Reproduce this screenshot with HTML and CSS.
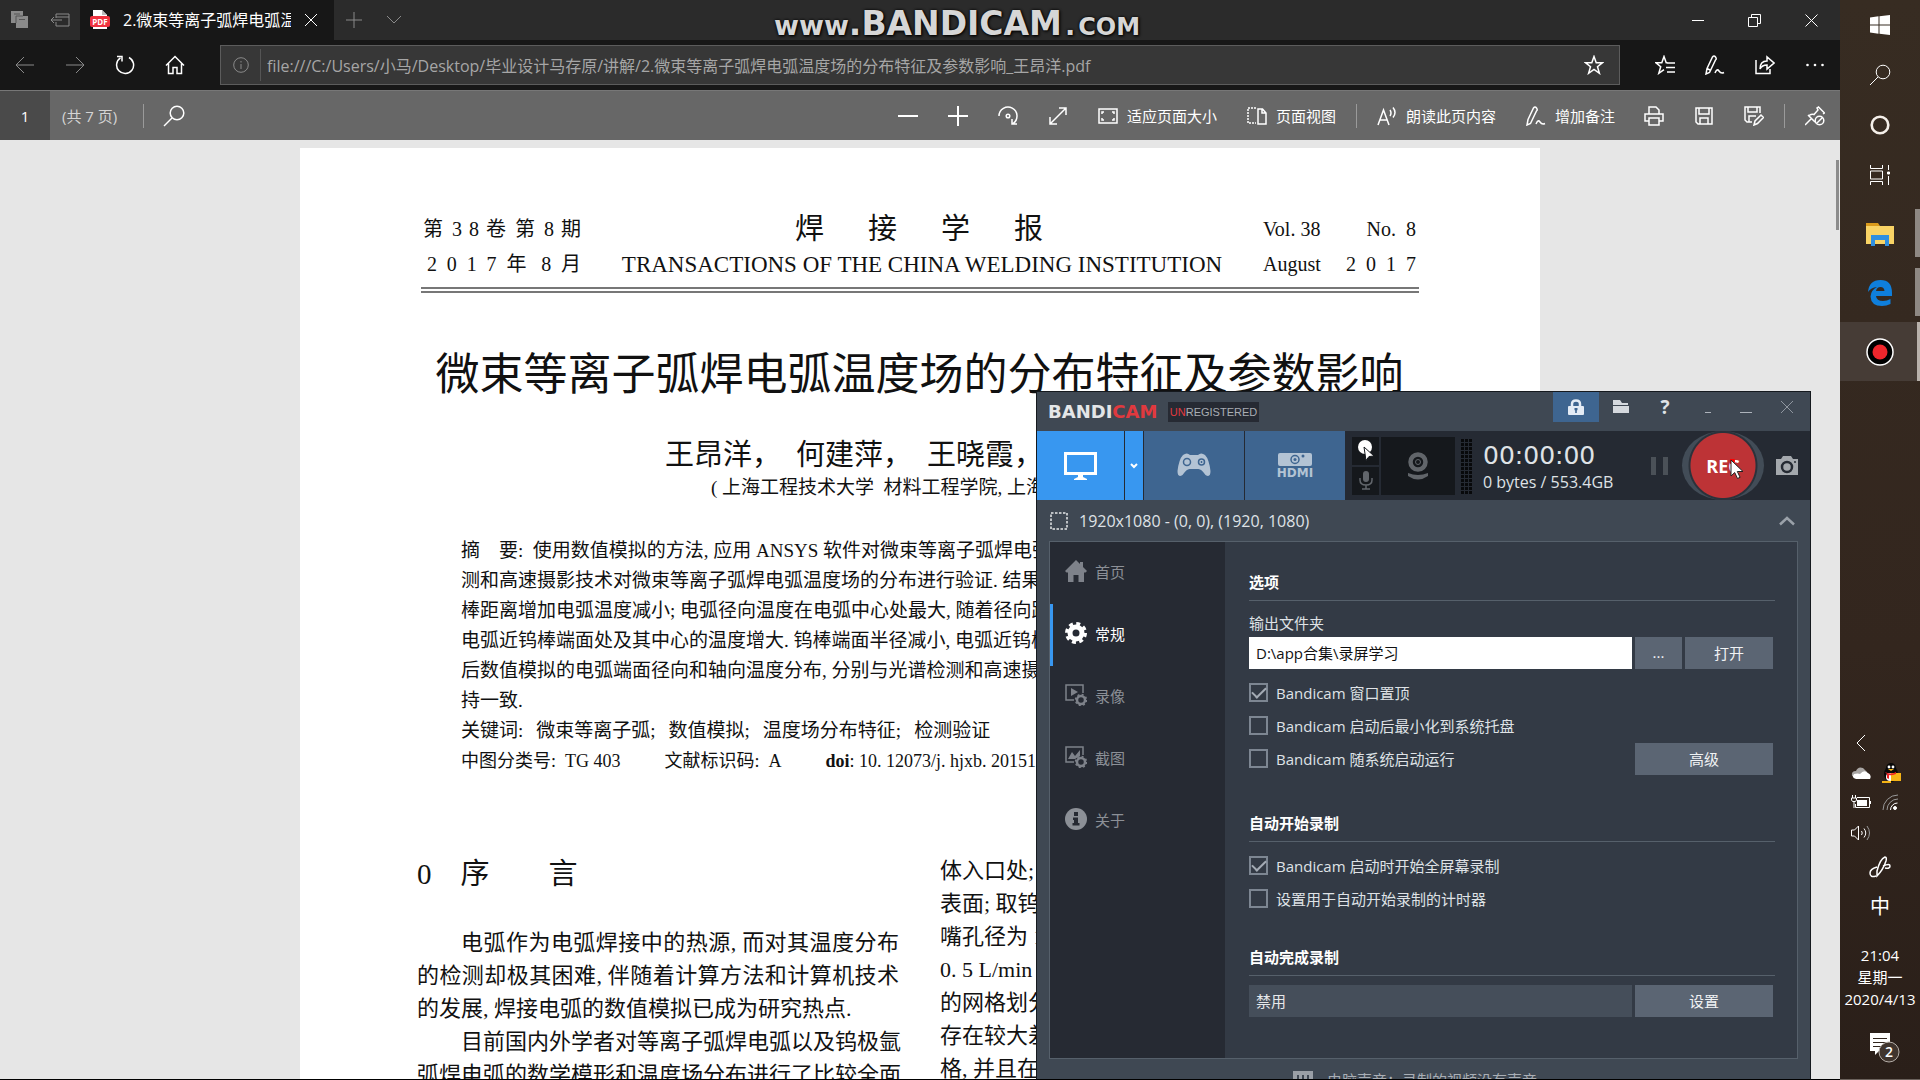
FILE: index.html
```html
<!DOCTYPE html>
<html lang="zh-CN">
<head>
<meta charset="utf-8">
<title>2.微束等离子弧焊电弧温度场</title>
<link rel="stylesheet" href="styles.css">
</head>
<body>
<div class="browser">
  <header class="tabs">
    <button class="tab-tool" aria-label="标签页"><svg width="20" height="20" viewBox="0 0 20 20"><path fill="#8a8a8a" d="M1 1h12v5h5v12H6v-5H1z"/><path d="M6 13V6h7M4 4h6M9 9.500h6" stroke="#555" fill="none"/></svg></button>
    <button class="tab-tool" aria-label="搁置标签页"><svg class="line dim" width="20" height="20" viewBox="0 0 20 20"><path d="M6 8V4h13v12H6v-4M6 7h13M1 10h11M4 7l-3 3 3 3"/></svg></button>
    <div class="tab">
      <svg width="20" height="22" viewBox="0 0 20 22"><path fill="#fff" d="M3 1h9l5 5v14H3z"/><path fill="#bbb" d="M12 1l5 5h-5z"/><rect y="7" width="20" height="11" rx="2" fill="#ef3340"/><text x="10" y="16" text-anchor="middle" class="pdf-mark">PDF</text></svg>
      <span class="tab-title">2.微束等离子弧焊电弧温度场</span>
      <button aria-label="关闭标签页"><svg class="line" width="14" height="14" viewBox="0 0 14 14"><path d="M1 1l12 12M13 1L1 13"/></svg></button>
    </div>
    <button class="tab-tool" aria-label="新建标签页"><svg class="line dim" width="18" height="18" viewBox="0 0 18 18"><path d="M9 1v16M1 9h16"/></svg></button>
    <button class="tab-tool" aria-label="标签页预览"><svg class="line dim" width="16" height="10" viewBox="0 0 16 10"><path d="M1 1l7 7 7-7"/></svg></button>
    <div class="win-buttons">
      <button aria-label="最小化"><svg class="line" width="12" height="12" viewBox="0 0 12 12"><path d="M0 6.500h12"/></svg></button>
      <button aria-label="还原"><svg class="line" width="13" height="13" viewBox="0 0 13 13"><path d="M.5 3.500h9v9h-9zM3.500 3V.5h9v9H10"/></svg></button>
      <button aria-label="关闭"><svg class="line" width="13" height="13" viewBox="0 0 13 13"><path d="M.5.5l12 12M12.500.5l-12 12"/></svg></button>
    </div>
  </header>

  <nav class="address-row">
    <button class="tool" aria-label="后退"><svg class="line dim" width="20" height="20" viewBox="0 0 20 20"><path d="M1 10h18M9 2l-8 8 8 8"/></svg></button>
    <button class="tool" aria-label="前进"><svg class="line dim" width="20" height="20" viewBox="0 0 20 20"><path d="M1 10h18M11 2l8 8-8 8"/></svg></button>
    <button class="tool" aria-label="刷新"><svg class="line bold" width="20" height="20" viewBox="0 0 20 20"><path d="M14 2.500a8.500 8.500 0 1 1-8.500.4M2 1.500h5v5"/></svg></button>
    <button class="tool" aria-label="主页"><svg class="line bold" width="20" height="20" viewBox="0 0 20 20"><path d="M1 10.500L10 1.500l9 9M3.500 8.500V18.500h4.500v-6h4v6h4.500v-10"/></svg></button>
    <div class="address">
      <svg class="line dim" width="16" height="16" viewBox="0 0 16 16"><circle cx="8" cy="8" r="7.300"/><path d="M8 7v5M8 4v1.500"/></svg>
      <input aria-label="地址" value="file:///C:/Users/小马/Desktop/毕业设计马存原/讲解/2.微束等离子弧焊电弧温度场的分布特征及参数影响_王昂洋.pdf">
      <button aria-label="收藏"><svg class="line bold" width="20" height="20" viewBox="0 0 20 20"><path d="M10 1.500l2.200 6.200h6.300l-5 4 1.900 6.600L10 14.400l-5.400 3.900 1.900-6.600-5-4h6.300z"/></svg></button>
    </div>
    <button class="tool" aria-label="收藏夹"><svg class="line bold" width="20" height="20" viewBox="0 0 20 20"><path d="M12.500 7.700h-1.300L9 1.500 6.800 7.700H.8l4.900 4-1.900 6.600L9 14.600M12 8h8M11 12.500h9M12 17h8"/></svg></button>
    <button class="tool" aria-label="添加笔记"><svg class="line bold" width="20" height="20" viewBox="0 0 20 20"><path d="M2 13.500L7.500 2q1.500-2 3 0t0 3L4.500 17.500l-3.500 1.500zM2 13.500l3 1.500M10 18q2-5 4-2t5 1.500"/></svg></button>
    <button class="tool" aria-label="共享"><svg class="line bold" width="20" height="20" viewBox="0 0 20 20"><path d="M1 5v13.500h14V14M5 14q0-8 7-8V2l7 6-7 6v-4q-5 0-7 4z"/></svg></button>
    <button class="tool" aria-label="更多"><svg width="18" height="4" viewBox="0 0 18 4" fill="#fff"><circle cx="1.500" cy="2" r="1.300"/><circle cx="9" cy="2" r="1.300"/><circle cx="16.500" cy="2" r="1.300"/></svg></button>
  </nav>

  <div class="pdf-bar">
    <input class="page-no" aria-label="页码" value="1">
    <span class="page-total">(共 7 页)</span>
    <i class="sep"></i>
    <button class="tool find" aria-label="查找"><svg class="line bold" width="22" height="22" viewBox="0 0 22 22"><circle cx="14" cy="8" r="6.800"/><path d="M9 13l-8 8"/></svg></button>
    <div class="pdf-tools">
      <button class="tool" aria-label="缩小"><svg class="line heavy" width="20" height="20" viewBox="0 0 20 20"><path d="M0 10h20"/></svg></button>
      <button class="tool" aria-label="放大"><svg class="line heavy" width="20" height="20" viewBox="0 0 20 20"><path d="M0 10h20M10 0v20"/></svg></button>
      <button class="tool" aria-label="旋转"><svg class="line bold" width="20" height="20" viewBox="0 0 20 20"><path d="M1 10a9 9 0 1 1 14 7.500M19 18h-5v-5"/><circle cx="10" cy="10" r="1.800"/></svg></button>
      <button class="tool" aria-label="全屏"><svg class="line bold" width="18" height="18" viewBox="0 0 18 18"><path d="M1 17L17 1M10 1h7v7M1 10v7h7"/></svg></button>
      <button class="wide"><svg class="line bold" width="20" height="16" viewBox="0 0 20 16"><path d="M1 1h18v14H1zM4 6V4h2M14 4h2v2M4 10v2h2M14 12h2v-2"/></svg>适应页面大小</button>
      <button class="wide"><svg class="line bold" width="20" height="18" viewBox="0 0 20 18"><path stroke-dasharray="2 1" d="M9 1H1v15h8"/><path d="M11 2h4.500L19 6v11h-8zM15 2v4h4"/></svg>页面视图</button>
      <i class="sep"></i>
      <button class="wide"><svg class="line bold" width="20" height="20" viewBox="0 0 20 20"><path d="M1 19L6.500 4 12 19M3 14h7M13 4q2 3 0 6M16 1.500q4 5 0 10"/></svg>朗读此页内容</button>
      <button class="wide"><svg class="line bold" width="20" height="20" viewBox="0 0 20 20"><path d="M2 13.500L7.500 2q1.500-2 3 0t0 3L4.500 17.500l-3.500 1.500zM10 18q2-5 4-2t5 1.500"/></svg>增加备注</button>
      <button class="tool" aria-label="打印"><svg class="line bold" width="20" height="20" viewBox="0 0 20 20"><path d="M5 8V1h7l3 3v4M5 15H1V8h18v7h-4M5 12h10v7H5z"/></svg></button>
      <button class="tool" aria-label="保存"><svg class="line bold" width="18" height="18" viewBox="0 0 18 18"><path d="M1 1h16v16H3l-2-2zM4 1v6h10V1M5 17v-6h8v6"/></svg></button>
      <button class="tool" aria-label="另存为"><svg class="line bold" width="20" height="20" viewBox="0 0 20 20"><path d="M8 16H3l-2-2V1h15v6M4 1v5h9V1M5 16v-6h7M10 19l1-4 6-6 2.500 2.500-6 6z"/></svg></button>
      <i class="sep"></i>
      <button class="tool" aria-label="取消固定"><svg class="line bold" width="20" height="20" viewBox="0 0 20 20"><path d="M0 19l6-6M3 9l7 7M4 9.500q3-2 5-1l4-4.500-1-2 1.500-1 6 6-1.500 1"/><circle cx="14.500" cy="14.500" r="4.300"/><path d="M11.500 17.500l6-6"/></svg></button>
    </div>
  </div>

  <main class="viewer">
    <article class="paper">
      <div class="masthead">
        <div class="spread">第 3 8 卷 第 8 期</div>
        <div class="journal"><span>焊</span><span>接</span><span>学</span><span>报</span></div>
        <div class="pair"><span>Vol. 38</span><span>No. &nbsp;8</span></div>
        <div class="spread late">2 0 1 7 年 8 月</div>
        <div class="journal-en">TRANSACTIONS OF THE CHINA WELDING INSTITUTION</div>
        <div class="pair"><span>August</span><span>2 &nbsp;0 &nbsp;1 &nbsp;7</span></div>
      </div>
      <h1>微束等离子弧焊电弧温度场的分布特征及参数影响</h1>
      <div class="authors"><span>王昂洋，</span><span>何建萍，</span><span>王晓霞，</span></div>
      <div class="affil">( 上海工程技术大学 &nbsp;材料工程学院, 上海</div>
      <div class="abstract">
        <p>摘　要: &nbsp;使用数值模拟的方法, 应用 ANSYS 软件对微束等离子弧焊电弧</p>
        <p>测和高速摄影技术对微束等离子弧焊电弧温度场的分布进行验证. 结果</p>
        <p>棒距离增加电弧温度减小; 电弧径向温度在电弧中心处最大, 随着径向距</p>
        <p>电弧近钨棒端面处及其中心的温度增大. 钨棒端面半径减小, 电弧近钨棒</p>
        <p>后数值模拟的电弧端面径向和轴向温度分布, 分别与光谱检测和高速摄影</p>
        <p>持一致.</p>
        <p class="keywords"><span>关键词:</span><span>微束等离子弧;</span><span>数值模拟;</span><span>温度场分布特征;</span><span>检测验证</span></p>
        <p class="codes"><span>中图分类号: &nbsp;TG 403</span><span>文献标识码: &nbsp;A</span><span><b>doi</b>: 10. 12073/j. hjxb. 20151</span></p>
      </div>
      <div class="columns">
        <section>
          <h2><span>0</span><span>序</span><span>言</span></h2>
          <p class="indent">电弧作为电弧焊接中的热源, 而对其温度分布</p>
          <p>的检测却极其困难, 伴随着计算方法和计算机技术</p>
          <p class="last">的发展, 焊接电弧的数值模拟已成为研究热点.</p>
          <p class="indent">目前国内外学者对等离子弧焊电弧以及钨极氩</p>
          <p>弧焊电弧的数学模形和温度场分布进行了比较全面</p>
        </section>
        <section>
          <p class="last">体入口处;</p>
          <p class="last">表面; 取钨棒</p>
          <p class="last">嘴孔径为 1</p>
          <p class="last">0. 5 L/min</p>
          <p class="last">的网格划分</p>
          <p class="last">存在较大差</p>
          <p class="last">格, 并且在</p>
        </section>
      </div>
    </article>
    <div class="scroll-thumb"></div>
  </main>
</div>

<aside class="taskbar">
  <button class="task" aria-label="开始"><svg width="20" height="20" viewBox="0 0 20 20" fill="#fff"><path d="M0 2.500l8.500-1.200v8.200H0zM9.500 1.200L20 0v9.500H9.500zM0 10.500h8.500v8.200L0 17.500zM9.500 10.500H20V20L9.500 18.800z"/></svg></button>
  <button class="task" aria-label="搜索"><svg class="line" width="22" height="22" viewBox="0 0 22 22"><circle cx="14" cy="8" r="6.800"/><path d="M9 13l-8 8"/></svg></button>
  <button class="task" aria-label="Cortana"><svg width="20" height="20" viewBox="0 0 20 20"><circle cx="10" cy="10" r="8.300" fill="none" stroke="#f4efe9" stroke-width="2.600"/></svg></button>
  <button class="task" aria-label="任务视图"><svg class="line" width="20" height="20" viewBox="0 0 20 20"><path d="M.5 0v3.500h12V0M.5 20v-3.500h12V20M.5 6h12v8H.5zM18.500 0v5M18.500 11v9"/><path fill="#fff" d="M17.500 7h2v2h-2z"/></svg></button>
  <button class="task app" aria-label="文件资源管理器"><svg width="28" height="24" viewBox="0 0 28 24"><path fill="#d99a1c" d="M0 1h12l2 3v3H0z"/><path fill="#f8d365" d="M0 4h28v18H0z"/><path fill="#2f8fe0" d="M5 24V13h18v11h-4v-6h-10v6z"/></svg></button>
  <button class="task app" aria-label="Edge"><svg width="26" height="28" viewBox="0 0 26 28"><path fill="#0f7fdc" d="M1 13Q2 1 13.500 1 25 1 25 14v3H9q.5 5 7 5 4 0 7.500-2v5q-4 2-8.500 2Q4 27 3.500 17.500 4 11 10 8q-6 .5-9 5zM9 12h8.500q-.3-4-4-4T9 12z"/></svg></button>
  <button class="task app current" aria-label="Bandicam"><svg width="28" height="28" viewBox="0 0 28 28"><circle cx="14" cy="14" r="13" fill="#000" stroke="#fff" stroke-width="1.500"/><circle cx="14" cy="14" r="7.500" fill="#f0262c"/></svg></button>
  <div class="tray">
    <div class="tray-icons">
      <svg class="line" width="20" height="20" viewBox="0 0 20 20"><path d="M14 2l-8 8 8 8"/></svg><i></i>
      <svg width="20" height="20" viewBox="0 0 20 20"><path fill="#a9a6a4" d="M1 13q-1-5 4-5 2-5 7-3l4 4-9 6z"/><path fill="#fff" d="M5 16q-5-1-2-5 4-1 6 0 4-5 8-1 4 2 2 6z"/></svg>
      <svg width="20" height="20" viewBox="0 0 20 20"><ellipse cx="10" cy="11" rx="7" ry="8" fill="#080808"/><circle cx="10" cy="5" r="5" fill="#080808"/><ellipse cx="9" cy="14" rx="4" ry="4" fill="#fff"/><circle cx="8" cy="4" r="1.400" fill="#fff"/><circle cx="12" cy="4" r="1.400" fill="#fff"/><path fill="#f4b315" d="M7 6h6l-3 2zM1 18h9v2H1zM10 10h10v8H10z"/><path fill="#e22" d="M4 9q6 3 11 0v2q-5 2-7 1v4l-2-1v-4z"/></svg>
      <svg width="20" height="20" viewBox="0 0 20 20"><path fill="none" stroke="#fff" d="M6 4.500h12.500v10H4.500V11M1.500 2v3M4.500 2v3M.5 5h5v2l-1 1.500h-3L.5 7zM3 9v6"/><path fill="#fff" d="M6 7h10v6H6zM19 8h1v3h-1z"/></svg>
      <svg width="20" height="20" viewBox="0 0 20 20" fill="none" stroke="#999"><path d="M2 17A15 15 0 0 1 17 2M6 17A11 11 0 0 1 17 6"/><path stroke="#fff" d="M9.500 17a7 7 0 0 1 7-7"/><circle cx="14" cy="15" r="1.500" fill="#fff" stroke="#fff"/></svg>
      <svg class="line" width="20" height="20" viewBox="0 0 20 20"><path d="M.5 7h3l4-4v14l-4-4h-3zM10.500 8q1.500 2 0 4M13 5.500q3.500 4.500 0 9"/><path stroke="#999" d="M16 3q5 7 0 14"/></svg><i></i>
    </div>
    <svg class="line bold ink" width="22" height="22" viewBox="0 0 22 22"><path d="M8 15Q11 3 16 1q2 0 1 4-3 9-9 15zM14 10q7-3 7 0t-5 2M8 11q-7 2-7 6 0 5 6 3"/></svg>
    <span class="ime">中</span>
    <div class="clock"><span>21:04</span><span>星期一</span><span>2020/4/13</span></div>
    <button class="notice" aria-label="通知"><svg width="32" height="32" viewBox="0 0 32 32"><path fill="#fff" d="M2 1h20v18H11l-4 4v-4H2z"/><path stroke="#30241c" d="M5 6.500h14M5 10.500h14M5 14.500h10"/><circle cx="21" cy="20" r="10" fill="#40352e" stroke="#b5aea8"/><text class="count" x="21" y="25" text-anchor="middle">2</text></svg></button>
  </div>
</aside>

<div class="watermark"><span>www</span><b>.BANDICAM</b><span class="dot">.</span><small>COM</small></div>

<section class="recorder">
  <header class="rec-title">
    <div class="logo">BANDI<em>CAM</em></div>
    <div class="badge"><em>UN</em>REGISTERED</div>
    <div class="rec-controls">
      <button class="lock" aria-label="置顶"><svg width="16" height="17" viewBox="0 0 16 17"><path fill="none" stroke="#e3ebf5" stroke-width="2.500" d="M4 8V5q0-3.500 4-3.500T12 5v3"/><rect y="7" width="16" height="9" rx="1" fill="#e3ebf5"/><path fill="#3e6590" d="M6.500 9h3v2l-.7.5V14H7.200v-2.500L6.500 11z"/></svg></button>
      <button aria-label="打开文件夹"><svg width="16" height="14" viewBox="0 0 16 14"><path fill="#d5d9de" d="M0 0h7l2 3h6v2H0zM0 6h16v7H0z"/></svg></button>
      <button class="help" aria-label="帮助">?</button>
      <button aria-label="最小化到托盘"><svg width="6" height="14"><path fill="#adb3bb" d="M0 12h6v1H0z"/></svg></button>
      <button class="narrow" aria-label="最小化"><svg width="12" height="14"><path fill="#adb3bb" d="M0 12h12v1H0z"/></svg></button>
      <button aria-label="关闭"><svg width="14" height="14" viewBox="0 0 14 14"><path stroke="#8f969f" d="M1 1l12 12M13 1L1 13"/></svg></button>
    </div>
  </header>

  <div class="rec-bar">
    <button class="mode screen on" aria-label="屏幕录制"><svg width="33" height="28" viewBox="0 0 33 28"><path fill="none" stroke="#fff" stroke-width="3" d="M1.500 1.500h30v20h-30z"/><path fill="#fff" d="M14 23h5v2l4 2v1H10v-1l4-2z"/></svg></button>
    <button class="mode drop on" aria-label="选择区域"><svg width="8" height="6" viewBox="0 0 8 6"><path fill="none" stroke="#fff" stroke-width="2" d="M1 1l3 3 3-3"/></svg></button>
    <button class="mode" aria-label="游戏录制"><svg width="34" height="25" viewBox="0 0 34 25"><path fill="#b3c3d4" d="M6 2q4-3 7 0h8q3-3 7 0 4 4 5.500 16 0 7-5 4-4-6-7-6H12.500q-3 0-7 6-5 3-5-4Q2 6 6 2z"/><circle cx="10" cy="9" r="3.500" fill="none" stroke="#3e6590" stroke-width="1.500"/><path stroke="#3e6590" stroke-width="1.500" fill="none" d="M21.500 9a3 3 0 1 1 6 0 3 3 0 1 1-6 0M24.500 8v2"/></svg></button>
    <button class="mode hdmi" aria-label="设备录制"><svg width="34" height="14" viewBox="0 0 34 14"><rect width="34" height="13" rx="2" fill="#b3c3d4"/><circle cx="17" cy="6.500" r="4" fill="none" stroke="#3e6590" stroke-width="1.500"/><circle cx="17" cy="6.500" r="1.500" fill="#3e6590"/><circle cx="25" cy="3" r="1.500" fill="#3e6590"/></svg><span>HDMI</span></button>
    <div class="inputs">
      <button aria-label="鼠标效果"><svg width="18" height="21" viewBox="0 0 18 21"><circle cx="8" cy="7" r="7" fill="#fff"/><path fill="#fff" stroke="#15181c" d="M7 7l10 9-5 .5-3 4z"/></svg></button>
      <button aria-label="麦克风"><svg width="14" height="19" viewBox="0 0 14 19"><rect x="4" width="6" height="11" rx="3" fill="#62666c"/><path fill="none" stroke="#62666c" stroke-width="1.500" d="M1 7v2q0 5 6 5t6-5V7M7 14v4M3 18h8"/></svg></button>
      <button class="webcam" aria-label="摄像头"><svg width="24" height="28" viewBox="0 0 24 28"><circle cx="12" cy="10" r="7.500" fill="none" stroke="#61656a" stroke-width="4.500"/><circle cx="12" cy="10" r="2.500" fill="none" stroke="#61656a"/><path fill="#61656a" d="M2 21q10 4 20 0v3q-10 7-20 0z"/></svg></button>
    </div>
    <i class="meter"></i>
    <div class="timer"><strong>00:00:00</strong><span>0 bytes / 553.4GB</span></div>
    <svg class="pause" width="20" height="20" viewBox="0 0 20 20" fill="#4b5158"><path d="M1 1h5v18H1zM13 1h5v18h-5z"/></svg>
    <button class="rec">REC</button>
    <button class="shot" aria-label="截图"><svg width="24" height="20" viewBox="0 0 24 20"><path fill="#a4a8ad" d="M1 3h5l2-3h8l2 3h5v16H1z"/><circle cx="12" cy="11" r="5" fill="none" stroke="#252a33" stroke-width="2.500"/><circle cx="20" cy="6" r="1" fill="#252a33"/></svg></button>
  </div>

  <div class="region">
    <svg width="18" height="18" viewBox="0 0 18 18"><path fill="none" stroke="#e6e8ea" stroke-width="1.500" stroke-dasharray="2.500 1.500" d="M1 1h16v16H1z"/></svg>
    <span>1920x1080 - (0, 0), (1920, 1080)</span>
    <svg class="fold" width="16" height="10" viewBox="0 0 16 10"><path fill="none" stroke="#9aa1a9" stroke-width="2.500" d="M1 8.500l7-6.500 7 6.500"/></svg>
  </div>

  <div class="settings">
    <nav class="side">
      <a href="#home"><svg width="22" height="22" viewBox="0 0 22 22" fill="#7e828a"><path d="M11 0l4 4V2h3v5l4 4-1.500 1.500H19V22h-5.500v-7h-5v7H3v-9.500H1.500L0 11z"/></svg>首页</a>
      <a href="#general" class="active"><svg width="22" height="22" viewBox="0 0 22 22"><circle cx="11" cy="11" r="6" fill="none" stroke="#fff" stroke-width="5"/><circle cx="11" cy="11" r="9.500" fill="none" stroke="#fff" stroke-width="3" stroke-dasharray="4 3.460"/></svg>常规</a>
      <a href="#video"><svg width="22" height="22" viewBox="0 0 22 22"><path fill="none" stroke="#7e828a" stroke-width="1.500" d="M9 16H1V1h17v8"/><path fill="#7e828a" d="M6 4l7 4-7 4z"/><circle cx="16" cy="16" r="4" fill="none" stroke="#7e828a" stroke-width="2.500"/><circle cx="16" cy="16" r="5.500" fill="none" stroke="#7e828a" stroke-width="1.500" stroke-dasharray="2 2.320"/></svg>录像</a>
      <a href="#image"><svg width="22" height="22" viewBox="0 0 22 22"><path fill="none" stroke="#7e828a" stroke-width="1.500" d="M9 16H1V1h17v8"/><path fill="#7e828a" d="M3 13l4-7 3 4 5-6v6l-5 3z"/><circle cx="16" cy="16" r="4" fill="none" stroke="#7e828a" stroke-width="2.500"/><circle cx="16" cy="16" r="5.500" fill="none" stroke="#7e828a" stroke-width="1.500" stroke-dasharray="2 2.320"/></svg>截图</a>
      <a href="#about"><svg width="22" height="22" viewBox="0 0 22 22"><circle cx="11" cy="11" r="11" fill="#8c9097"/><path fill="#262a33" d="M9 4h4v4H9zM8 9.500h5V15h1.500v2.500h-7V15H9v-3H8z"/></svg>关于</a>
    </nav>
    <form class="options">
      <h3>选项</h3>
      <label class="field-label" for="folder">输出文件夹</label>
      <div class="field">
        <input id="folder" type="text" value="D:\app合集\录屏学习">
        <button type="button" class="more">...</button>
        <button type="button" class="open">打开</button>
      </div>
      <div class="checks top">
        <div>
          <label><input type="checkbox" checked>Bandicam 窗口置顶</label>
          <label><input type="checkbox">Bandicam 启动后最小化到系统托盘</label>
          <label><input type="checkbox">Bandicam 随系统启动运行</label>
        </div>
        <button type="button" class="long">高级</button>
      </div>
      <h3>自动开始录制</h3>
      <div class="checks">
        <div>
          <label><input type="checkbox" checked>Bandicam 启动时开始全屏幕录制</label>
          <label><input type="checkbox">设置用于自动开始录制的计时器</label>
        </div>
      </div>
      <h3>自动完成录制</h3>
      <div class="field finish">
        <input type="text" class="disabled" aria-label="自动完成录制" value="禁用" readonly>
        <button type="button" class="long">设置</button>
      </div>
    </form>
  </div>
  <footer class="status">
    <svg width="20" height="16" viewBox="0 0 20 16"><path fill="#9a9fa6" d="M0 0h20v16H0z"/><path stroke="#3f4853" stroke-width="2" d="M5 4v6M10 4v6M15 4v6"/></svg>
    <span>电脑声音：录制的视频没有声音</span>
  </footer>
</section>

<svg class="cursor" width="14" height="21" viewBox="0 0 14 21"><circle cx="2" cy="2" r="3" fill="#f00"/><path fill="#fff" stroke="#222" d="M1 1v16l3.700-3.500L7.500 19.500l2.600-1.200-2.800-5.800H13z"/></svg>
</body>
</html>
```

FILE: styles.css
```css
* { box-sizing: border-box; }

body {
  margin: 0;
  display: flex;
  height: 100vh;
  overflow: hidden;
  position: relative;
  font-family: "Open Sans", "Noto Sans CJK SC", sans-serif;
  font-size: 15px;
  color: #fff;
}

button, input { font: inherit; color: inherit; border: 0; background: none; padding: 0; margin: 0; }
button { display: flex; align-items: center; justify-content: center; }
svg { flex: none; }
h1, h2, h3, p { margin: 0; font-weight: 400; }
em { font-style: normal; color: #e0393e; }

.line { fill: none; stroke: #fff; stroke-width: 1; }
.line.bold { stroke-width: 1.5; }
.line.heavy { stroke-width: 2; }
.line.dim { stroke: #8a8a8a; }

/* Browser */
.browser { flex: 1; min-width: 0; display: flex; flex-direction: column; border-bottom: 1px solid #000; }

.tabs { display: flex; height: 40px; flex: none; background: #2b2b2b; }
.tab-tool { width: 40px; }
.tab { display: flex; align-items: center; width: 254px; padding-left: 10px; background: #171717; }
.tab-title { width: 168px; margin-left: 13px; overflow: hidden; white-space: nowrap; font-size: 16px; line-height: 24px; }
.tab button { width: 40px; height: 40px; }
.pdf-mark { font: bold 8px "Open Sans", sans-serif; fill: #fff; }
.win-buttons { display: flex; margin-left: auto; }
.win-buttons button { width: 57px; }

.address-row { display: flex; align-items: center; height: 50px; flex: none; background: #171717; }
.tool { width: 50px; height: 50px; flex: none; }
.address { display: flex; align-items: center; flex: 1; height: 40px; margin: 0 20px; padding-left: 12px; background: #373737; border: 1px solid #5c5c5c; }
.address input { flex: 1; height: 32px; margin-left: 11px; padding-left: 6px; border-left: 1px solid #555; color: #a6a6a6; font-size: 16px; }
.address button { width: 50px; }

.pdf-bar { display: flex; align-items: center; height: 50px; flex: none; background: #676767; border-top: 1px solid #777; }
.page-no { width: 50px; height: 50px; background: #4a4a4a; text-align: center; }
.page-total { width: 93px; padding-left: 12px; color: #d4d4d4; }
.sep { width: 1px; height: 24px; background: #9a9a9a; }
.find { margin-left: 6px; }
.pdf-tools { display: flex; align-items: center; margin-left: auto; }
.wide { gap: 9px; height: 50px; padding: 0 10px; }
.wide + .wide { margin-left: 10px; }
.pdf-tools .wide:nth-of-type(5) { margin-left: 5px; }
.wide + .sep, .sep + .wide { margin-left: 10px; }
.wide + .tool { margin-left: 4px; }
.tool + .sep { margin-left: 5px; }
.sep + .tool { margin-left: 5px; }

.viewer { position: relative; flex: 1; min-height: 0; overflow: hidden; padding-top: 8px; background: #e6e6e6; }
.scroll-thumb { position: absolute; right: 1px; top: 20px; width: 3px; height: 70px; background: #8c8c8c; }

/* Article */
.paper {
  max-width: 1240px;
  margin: 0 auto;
  padding: 64px 118px 64px 117px;
  min-height: 1600px;
  background: #fff;
  color: #111;
  font-family: "Liberation Serif", "Noto Sans CJK SC", serif;
  font-size: 19px;
  white-space: nowrap;
}
.masthead {
  display: grid;
  grid-template-columns: 160px 1fr 156px;
  grid-auto-rows: 35px;
  align-items: center;
  margin: 0 3px 0 4px;
  padding-bottom: 5px;
  border-bottom: 6px double #777;
  font-size: 20px;
  line-height: 35px;
}
.spread { padding-left: 2px; text-align: justify; text-align-last: justify; }
.late { padding-left: 6px; }
.journal { display: flex; justify-content: center; gap: 44px; padding-right: 6px; font-size: 29px; }
.journal-en { text-align: center; font-size: 23px; }
.pair { display: flex; justify-content: space-between; padding-right: 3px; }
.paper h1 { margin-top: 53px; font-size: 44px; line-height: 60px; text-align: center; }
.authors { display: flex; gap: 15px; margin-top: 29px; padding-left: 248px; font-size: 29px; line-height: 40px; }
.affil { padding-left: 294px; line-height: 26px; }
.abstract { margin-top: 35px; padding-left: 44px; line-height: 30px; }
.keywords { display: flex; gap: 13px; }
.codes { display: flex; gap: 44px; font-size: 18px; }
.columns { display: grid; grid-template-columns: 482px 482px; justify-content: space-between; margin-top: 78px; font-size: 22px; line-height: 33px; }
.columns h2 { display: flex; margin-bottom: 32px; font-size: 29px; line-height: 40px; }
.columns h2 span:nth-child(2) { margin: 0 59px 0 29px; }
.columns p { text-align: justify; text-align-last: justify; }
.columns .indent { padding-left: 44px; }
.columns .last { text-align-last: left; }

/* Taskbar */
.taskbar { display: flex; flex-direction: column; width: 80px; flex: none; background: linear-gradient(#372c22, #33261e 60%, #2a1f19); border-bottom: 1px solid #6b625c; }
.task { width: 100%; height: 50px; }
.task.app { height: 59px; padding-top: 0; background: linear-gradient(#8e8883, #8e8883) no-repeat right 5px / 5px 48px; }
.task.app:nth-of-type(5) { margin-top: 4px; }
.task.current { background: linear-gradient(90deg, #463c36 0 77px, #b8b1ab 77px); }
.tray { display: flex; flex-direction: column; align-items: center; margin-top: auto; }
.tray-icons { display: grid; grid-template-columns: 20px 20px; gap: 10px; margin-right: 8px; }
.ink { margin-top: 13px; }
.ime { margin-top: 14px; font-size: 20px; line-height: 30px; }
.clock { display: flex; flex-direction: column; align-items: center; margin-top: 22px; line-height: 22px; }
.notice { margin: 22px 0 15px 8px; }
.count { font: 600 14px "Open Sans", sans-serif; fill: #fff; }

/* Watermark */
.watermark {
  position: absolute;
  left: 774px;
  top: 4px;
  white-space: nowrap;
  font-family: "DejaVu Sans", sans-serif;
  font-weight: 700;
  font-size: 27px;
  line-height: 40px;
  color: #d6d6d6;
  text-shadow: 0 0 3px #000, 1px 1px 3px #000;
}
.watermark b { font-size: 33px; }
.watermark .dot { margin: 0 3px; }
.watermark small { font-size: 24px; }

/* Recorder window */
.recorder {
  position: absolute;
  right: 109px;
  top: 391px;
  bottom: 0;
  width: 775px;
  overflow: hidden;
  display: flex;
  flex-direction: column;
  background: #3f4853;
  border: 1px solid #15191e;
  border-bottom-color: #000;
  color: #dfe2e6;
}
.rec-title { display: flex; align-items: flex-start; height: 39px; flex: none; padding-left: 11px; }
.logo { width: 110px; font: 700 18px/20px "DejaVu Sans", sans-serif; margin-top: 10px; color: #e4e6e8; }
.badge { width: 91px; margin: 10px 0 0 10px; background: #262a33; font: 11px/20px "Liberation Sans", sans-serif; text-align: center; color: #a9adb3; }
.rec-controls { display: flex; margin-left: auto; }
.rec-controls button { width: 42px; height: 30px; }
.rec-controls .lock { width: 46px; background: #3e6590; }
.rec-controls button:nth-child(2), .rec-controls .help { width: 44px; }
.rec-controls .narrow { width: 34px; }
.rec-controls button:last-child { width: 47px; }
.help { font-size: 19px; font-weight: 700; }

.rec-bar { display: flex; align-items: center; height: 69px; flex: none; background: #252a33; }
.mode { width: 100px; height: 69px; flex: none; margin-right: 1px; background: #3e6590; }
.mode.on { background: #3897f0; }
.mode.screen { width: 87px; }
.mode.drop { width: 18px; }
.hdmi { flex-direction: column; }
.hdmi span { font: 700 12px/12px "DejaVu Sans", sans-serif; color: #b3c3d4; }
.inputs { display: grid; grid-template-columns: 27px 74px; grid-template-rows: 28px 28px; gap: 2px; margin-left: 6px; }
.inputs button { background: #15181c; }
.webcam { grid-column: 2; grid-row: 1 / 3; }
.meter { width: 12px; height: 56px; margin-left: 5px; background: repeating-linear-gradient(#252a33 0 1px, transparent 1px 4px), repeating-linear-gradient(90deg, #252a33 0 1px, #08090b 1px 4px); }
.timer { display: flex; flex-direction: column; width: 178px; padding: 4px 0 0 11px; white-space: nowrap; }
.timer strong { font: 25px/28px "DejaVu Sans", sans-serif; }
.timer span { font-size: 16px; line-height: 24px; }
.pause { margin-right: 12px; }
.rec { width: 82px; height: 69px; border-radius: 50%; background: radial-gradient(circle, #bd3336 0 32px, #2b323b 33px 34px, #424c57 35px); font: 700 18px "Open Sans", sans-serif; color: #fff; }
.shot { margin-left: 11px; }

.region { display: flex; align-items: center; height: 41px; flex: none; padding: 0 15px 0 13px; font-size: 16px; }
.region span { margin-left: 11px; }
.fold { margin-left: auto; }

.settings { display: flex; height: 518px; flex: none; margin: 0 12px; border: 1px solid #56606b; background: #333a45; }
.side { width: 175px; background: #262a33; }
.side a { display: flex; align-items: center; gap: 8px; height: 62px; padding: 0 0 4px 12px; border-left: 3px solid transparent; color: #8c9097; text-decoration: none; }
.side .active { border-color: #3897f0; color: #fff; }
.options { flex: 1; padding: 28px 22px 0 24px; }
.options h3 { height: 31px; padding-bottom: 6px; border-bottom: 1px solid #56606b; font-size: 15px; font-weight: 700; line-height: 24px; color: #fff; }
.field-label { display: block; margin-top: 10px; line-height: 24px; }
.field { display: flex; gap: 3px; margin-top: 2px; padding-right: 2px; }
.field input { flex: 1; min-width: 0; height: 32px; padding: 0 0 2px 7px; background: #fff; color: #111; }
.field .disabled { background: #454e5a; color: #e6e8ea; }
.field button, .long { height: 32px; padding-bottom: 2px; background: #5b6573; color: #f0f2f4; }
.field .more { width: 47px; }
.field .open { width: 88px; }
.field .long, .long { width: 138px; }
.finish { margin-top: 9px; }
.checks { display: flex; justify-content: space-between; align-items: flex-end; padding-right: 2px; margin: 7px 0 30px; }
.checks.top { margin: 7px 0 36px; }
.checks label { display: flex; align-items: center; gap: 8px; height: 33px; }
.checks input { display: grid; place-items: center; appearance: none; width: 19px; height: 19px; border: 2px solid #7d8692; }
.checks input:checked::after { content: ""; width: 12px; height: 6px; margin-bottom: 4px; border: solid #a4abb4; border-width: 0 0 2px 2px; transform: rotate(-45deg); }
.status { display: flex; align-items: flex-start; gap: 14px; padding: 12px 0 0 256px; color: #a9aeb5; }
.status span { line-height: 18px; }

.cursor { position: absolute; left: 1730px; top: 459px; }
```
